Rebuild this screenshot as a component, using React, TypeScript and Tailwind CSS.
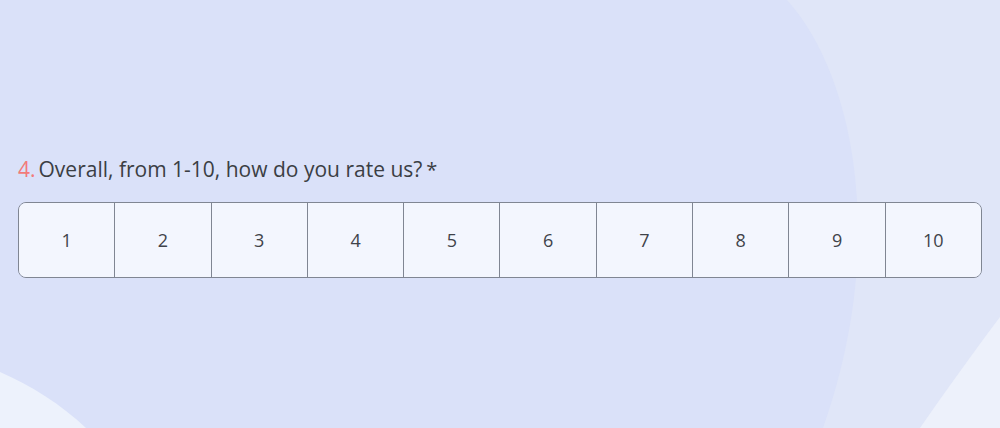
export default function App() {
  const nums = [1, 2, 3, 4, 5, 6, 7, 8, 9, 10];

  return (
    <div className="relative w-[1000px] h-[428px] overflow-hidden bg-[#dae1f9] font-['Open_Sans','Noto_Sans',sans-serif]">
      {/* background blobs */}
      <svg className="absolute inset-0" width="1000" height="428" viewBox="0 0 1000 428">
        <path d="M787,0 C855,75 888,245 823,428 L1000,428 L1000,0 Z" fill="#e0e6f8" />
        <path d="M1000,317 C975,350 945,392 920,428 L1000,428 Z" fill="#edf1fb" />
        <path d="M0,372 C30,385 62,405 86,428 L0,428 Z" fill="#edf2fc" />
      </svg>

      <div className="relative pt-[154px] pl-[18px] w-[982px]">
        <h2 className="flex items-baseline text-[21px] leading-[30px] text-[#3b3e44]">
          <span className="text-[#f27a7a]">4.</span>
          <span className="ml-[3px]">Overall, from 1-10, how do you rate us?</span>
          <span className="ml-[4px] text-[20px]">*</span>
        </h2>

        <div className="mt-[17px] flex h-[76px] border border-[#808693] rounded-[8px] overflow-hidden">
          {nums.map((n) => (
            <button
              key={n}
              className="flex-1 flex items-center justify-center bg-[#f3f6fe] text-[18px] text-[#3f434a] border-l border-[#808693] first:border-l-0"
            >
              {n}
            </button>
          ))}
        </div>
      </div>
    </div>
  );
}
